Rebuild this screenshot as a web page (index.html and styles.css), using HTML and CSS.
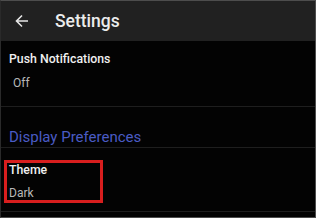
FILE: index.html
```html
<!DOCTYPE html>
<html lang="en">
<head>
    <meta charset="UTF-8">
    <title>Settings</title>
    <link rel="stylesheet" href="styles.css">
</head>
<body>
    <div class="screen">
        <div class="toolbar">
            <svg class="back" width="16" height="16" viewBox="0 0 16 16">
                <path d="M14 8H2.5M8 2.5L2.5 8L8 13.5" fill="none" stroke="#e6e6e6" stroke-width="1.6"/>
            </svg>
            <span class="title">Settings</span>
        </div>
        <div class="pref">
            <div class="pref-title">Push Notifications</div>
            <div class="pref-value indent">Off</div>
        </div>
        <div class="category">Display Preferences</div>
        <div class="pref highlight-row">
            <div class="highlight">
                <div class="pref-title">Theme</div>
                <div class="pref-value">Dark</div>
            </div>
        </div>
    </div>
</body>
</html>
```

FILE: styles.css
```css
body {
    margin: 0;
    background: #000;
    font-family: Roboto, 'Noto Sans', sans-serif;
}
.screen {
    width: 314px;
    height: 216px;
    border: 1px solid #4d4d4d;
    border-left-color: #2a2a2a;
    background: #030303;
    overflow: hidden;
}
.toolbar {
    height: 40px;
    background: #212121;
    display: flex;
    align-items: center;
    padding-left: 13px;
}
.back {
    margin-right: 25px;
}
.title {
    color: #ececec;
    font-size: 17.5px;
    font-weight: 500;
}
.pref {
    padding: 11px 8px 0 8px;
    height: 54px;
    border-bottom: 1px solid #1e1e1e;
}
.pref-title {
    color: #f0f0f0;
    font-size: 12.3px;
    font-weight: 500;
}
.pref-value {
    color: #b8b8b8;
    font-size: 12px;
    margin-top: 10px;
}
.indent {
    padding-left: 4px;
}
.category {
    color: #4a5bc4;
    font-size: 15px;
    height: 19px;
    padding: 21px 8px 0 8px;
    border-bottom: 1px solid #1e1e1e;
}
.highlight-row {
    padding: 12px 0 0 3px;
    height: 51px;
}
.highlight {
    width: 91px;
    height: 37px;
    border: 3px solid #d81e1e;
    padding: 0 0 0 2px;
}
.highlight .pref-value {
    margin-top: 9px;
}
```
